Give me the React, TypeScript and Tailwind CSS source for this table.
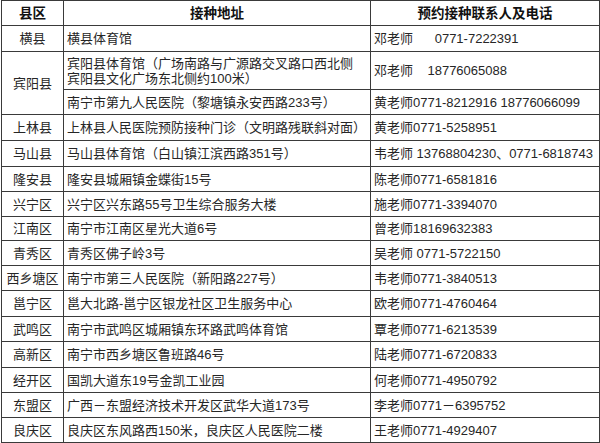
const rows: { area: string; addr: string[]; contact: string; h: string }[] = [
  { area: '横县', addr: ['横县体育馆'], contact: '邓老师      0771-7222391', h: 'h-[26px]' },
  { area: '上林县', addr: ['上林县人民医院预防接种门诊（文明路残联斜对面）'], contact: '黄老师0771-5258951', h: 'h-[26px]' },
  { area: '马山县', addr: ['马山县体育馆（白山镇江滨西路351号）'], contact: '韦老师 13768804230、0771-6818743', h: 'h-[26px]' },
  { area: '隆安县', addr: ['隆安县城厢镇金蝶街15号'], contact: '陈老师0771-6581816', h: 'h-[25px]' },
  { area: '兴宁区', addr: ['兴宁区兴东路55号卫生综合服务大楼'], contact: '施老师0771-3394070', h: 'h-[25px]' },
  { area: '江南区', addr: ['南宁市江南区星光大道6号'], contact: '曾老师18169632383', h: 'h-[24px]' },
  { area: '青秀区', addr: ['青秀区佛子岭3号'], contact: '吴老师 0771-5722150', h: 'h-[25px]' },
  { area: '西乡塘区', addr: ['南宁市第三人民医院（新阳路227号）'], contact: '韦老师0771-3840513', h: 'h-[25px]' },
  { area: '邕宁区', addr: ['邕大北路-邕宁区银龙社区卫生服务中心'], contact: '欧老师0771-4760464', h: 'h-[26px]' },
  { area: '武鸣区', addr: ['南宁市武鸣区城厢镇东环路武鸣体育馆'], contact: '覃老师0771-6213539', h: 'h-[25px]' },
  { area: '高新区', addr: ['南宁市西乡塘区鲁班路46号'], contact: '陆老师0771-6720833', h: 'h-[26px]' },
  { area: '经开区', addr: ['国凯大道东19号金凯工业园'], contact: '何老师0771-4950792', h: 'h-[25px]' },
  { area: '东盟区', addr: ['广西－东盟经济技术开发区武华大道173号'], contact: '李老师0771－6395752', h: 'h-[25px]' },
  { area: '良庆区', addr: ['良庆区东风路西150米，良庆区人民医院二楼'], contact: '王老师0771-4929407', h: 'h-[25px]' },
];

const cell = 'border border-[#3a3a3a] px-[3px] py-0 align-middle whitespace-pre';

export default function App() {
  return (
    <div className="w-[600px] h-[443px] bg-white font-['Liberation_Sans','Noto_Sans_CJK_SC',sans-serif] text-[13px] leading-[15px] text-[#262626]">
      <table className="ml-px w-[598px] table-fixed border-collapse">
        <colgroup>
          <col className="w-[62px]" />
          <col className="w-[307px]" />
          <col className="w-[229px]" />
        </colgroup>
        <tbody>
          <tr className="h-[25px] bg-white text-[13.5px] font-bold text-[#111]">
            <td className={`${cell} text-center`}>县区</td>
            <td className={`${cell} text-center`}>接种地址</td>
            <td className={`${cell} text-center`}>预约接种联系人及电话</td>
          </tr>
          {rows.slice(0, 1).map((r) => (
            <tr key={r.area} className={r.h}>
              <td className={`${cell} text-center`}>{r.area}</td>
              <td className={cell}>{r.addr[0]}</td>
              <td className={cell}>{r.contact}</td>
            </tr>
          ))}
          <tr className="h-[38px]">
            <td rowSpan={2} className={`${cell} text-center`}>宾阳县</td>
            <td className={`${cell} whitespace-normal`}>
              宾阳县体育馆（广场南路与广源路交叉路口西北侧
              <br />
              宾阳县文化广场东北侧约100米）
            </td>
            <td className={cell}>{'邓老师    18776065088'}</td>
          </tr>
          <tr className="h-[25px]">
            <td className={cell}>南宁市第九人民医院（黎塘镇永安西路233号）</td>
            <td className={cell}>黄老师0771-8212916 18776066099</td>
          </tr>
          {rows.slice(1).map((r) => (
            <tr key={r.area} className={r.h}>
              <td className={`${cell} text-center`}>{r.area}</td>
              <td className={cell}>{r.addr[0]}</td>
              <td className={cell}>{r.contact}</td>
            </tr>
          ))}
        </tbody>
      </table>
    </div>
  );
}
